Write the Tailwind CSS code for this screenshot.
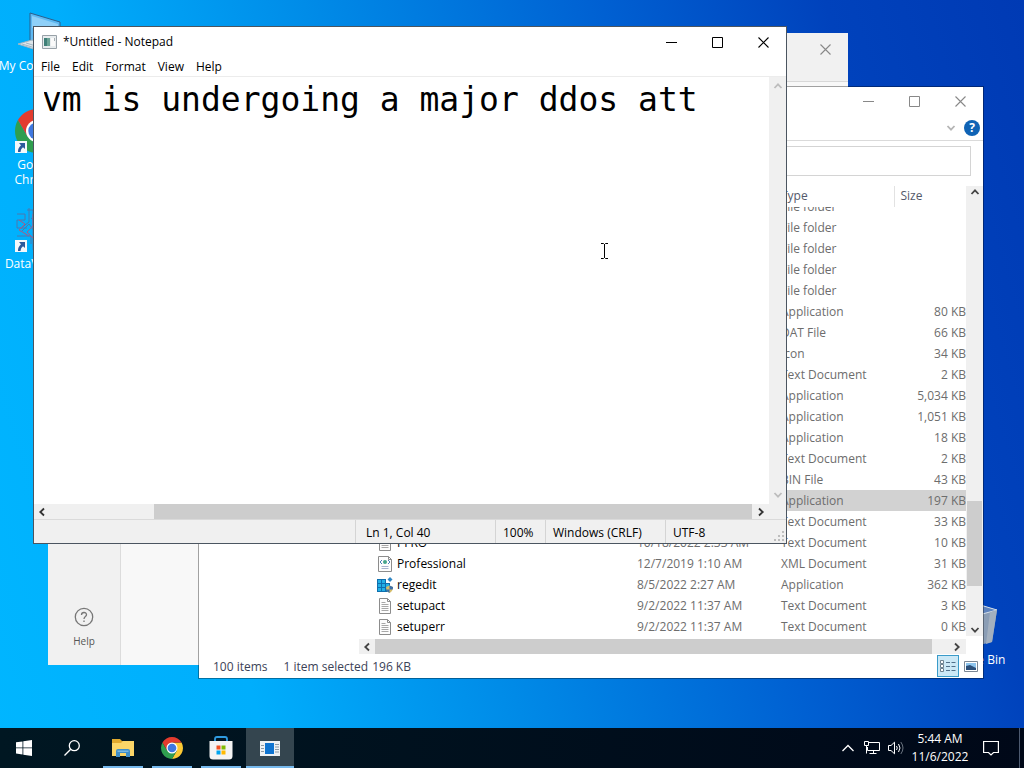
<!DOCTYPE html>
<html lang="en">
<head>
    <meta charset="UTF-8">
    <meta name="viewport" content="width=device-width, initial-scale=1.0">
    <title>Desktop</title>
    <script src="https://cdn.jsdelivr.net/npm/@tailwindcss/browser@4"></script>
</head>
<body class="font-['Open_Sans','Noto_Sans',sans-serif] text-xs text-black">

    <!-- shared shapes -->
    <svg class="hidden">
        <symbol id="win-min" viewBox="0 0 11 11"><path d="M0 5.5h11" stroke="currentColor"/></symbol>
        <symbol id="win-max" viewBox="0 0 11 11"><path d="M.5 .5h10v10h-10z" fill="none" stroke="currentColor"/></symbol>
        <symbol id="win-close" viewBox="0 0 11 11"><path d="M.5 .5l10 10M10.5 .5l-10 10" stroke="currentColor" stroke-width="1.1"/></symbol>
        <symbol id="arrow-up" viewBox="0 0 10 10"><path d="M1.5 7L5 3.3L8.5 7" fill="none" stroke="currentColor" stroke-width="1.8"/></symbol>
        <symbol id="arrow-down" viewBox="0 0 10 10"><path d="M1.5 3L5 6.7L8.5 3" fill="none" stroke="currentColor" stroke-width="1.8"/></symbol>
        <symbol id="arrow-left" viewBox="0 0 10 10"><path d="M7 1.5L3.3 5L7 8.5" fill="none" stroke="currentColor" stroke-width="1.8"/></symbol>
        <symbol id="arrow-right" viewBox="0 0 10 10"><path d="M3 1.5L6.7 5L3 8.5" fill="none" stroke="currentColor" stroke-width="1.8"/></symbol>
        <symbol id="chrome" viewBox="0 0 48 48">
            <path d="M24 13h19.05A22 22 0 0 1 24 46l9.5-16.5z" fill="#fcc934"/>
            <path d="M14.5 29.5L4.95 13A22 22 0 0 0 24 46l9.5-16.5z" fill="#2f9e4f"/>
            <path d="M4.95 13A22 22 0 0 1 43.05 13H24L14.5 29.5z" fill="#e33b2e"/>
            <circle cx="24" cy="24" r="11" fill="#fff"/>
            <circle cx="24" cy="24" r="8.7" fill="#3f78e0"/>
        </symbol>
        <symbol id="shortcut" viewBox="0 0 12 12">
            <path d="M0 0h12v12H0z" fill="#f4f8fb"/>
            <path d="M4 2h6v6L8 6.3C6.5 7.5 6 8.5 5.5 11H3C2.8 8 4 6 6 4.2z" fill="#2c5a9c"/>
        </symbol>
        <symbol id="file-text" viewBox="0 0 16 16">
            <path d="M2.5 .5h8l3 3v12h-11z" fill="#fdfdfd" stroke="#8c8c8c"/>
            <path d="M10.5 .5v3h3" fill="none" stroke="#8c8c8c"/>
            <path d="M4.5 4.5h4M4.5 6.5h7M4.5 8.5h7M4.5 10.5h7M4.5 12.5h7" stroke="#a8a8a8"/>
        </symbol>
        <symbol id="file-xml" viewBox="0 0 16 16">
            <path d="M1.5 .5h10l3 3v12h-13z" fill="#fdfdfd" stroke="#8c8c8c"/>
            <path d="M11.5 .5v3h3" fill="none" stroke="#8c8c8c"/>
            <path d="M5 4L3 6l2 2M11 4l2 2l-2 2" fill="none" stroke="#4a7fb5"/>
            <circle cx="8" cy="6" r="2" fill="#46a58c"/>
            <path d="M4.5 10.5h7M4.5 12.5h7" stroke="#a9b4cf"/>
        </symbol>
        <symbol id="file-reg" viewBox="0 0 16 16">
            <path d="M0 2h9v4h4v9H0z" fill="#0f6fae"/>
            <path d="M1 3h3v3H1zM5 3h3v3H5zM1 7h3v3H1zM5 7h3v3H5zM9 7h3v3H9zM1 11h3v3H1zM5 11h3v3H5z" fill="#23b0e6"/>
            <path d="M13 0l2.5 2.5L13 5l-2.5-2.5z" fill="#2f86c4"/>
            <path d="M9 10l3.5-1.5L16 10c0 3-1.3 5-3.5 6C10.3 15 9 13 9 10z" fill="#d5bd6a"/>
            <path d="M12.5 8.5L16 10c0 1 0 1.5-.3 2.5h-3.2zM12.5 12.5V16C11 15.3 10 14 9.4 12.5z" fill="#3c6fa8"/>
        </symbol>
    </svg>

    <div class="relative h-screen overflow-hidden bg-[linear-gradient(74deg,#00b6ff_0%,#00aefc_22%,#008ce8_42%,#0060d2_66%,#0042bc_84%,#003ab4_100%)]">

        <!-- desktop icons -->
        <div class="w-[74px] pt-2 text-center leading-[15px] text-white">
            <div class="flex h-[99px] flex-col items-center gap-0.5">
                <svg class="size-12" viewBox="0 0 48 48">
                    <path d="M17 5l30 9v26l-30-6z" fill="#5fb9f2" stroke="#2b5f8c"/>
                    <path d="M19 8l26 8v10L19 20z" fill="#8fd0f8"/>
                    <path d="M5 36l14-4l26 8l-12 5z" fill="#dfe6ea" stroke="#9fb6c4"/>
                    <path d="M9 36l20 6M13 35l20 6" stroke="#9fb6c4"/>
                </svg>
                <span class="whitespace-nowrap">My Computer</span>
            </div>
            <div class="flex h-[99px] flex-col items-center gap-0.5">
                <div class="relative">
                    <svg class="size-12"><use href="#chrome"/></svg>
                    <svg class="absolute bottom-0.5 left-0.5 size-3"><use href="#shortcut"/></svg>
                </div>
                <span>Google<br>Chrome</span>
            </div>
            <div class="flex h-[99px] flex-col items-center gap-0.5">
                <div class="relative">
                    <svg class="size-12" viewBox="0 0 48 48" fill="none">
                        <path d="M4 8h8v6h-8v8h10M16 2v14l-8 6M14 4h6v40M8 26l8-8l6 8M4 30h14v8M18 12l8 6l8-8v30" stroke="#4a78b0"/>
                        <path d="M6 14l6 4l-6 6l10 6M20 8v12l-6 6l8 8v10M24 14h16v20H24z" stroke="#a85a86"/>
                    </svg>
                    <svg class="absolute bottom-0.5 left-0.5 size-3"><use href="#shortcut"/></svg>
                </div>
                <span class="whitespace-nowrap">DataViewer</span>
            </div>
        </div>

        <div class="absolute top-[602px] left-[937px] flex w-[74px] flex-col items-center gap-0.5 leading-[15px] text-white">
            <svg class="size-12" viewBox="0 0 48 48">
                <path d="M3 6l24-4l20 6l-5 32l-21 5l-13-4z" fill="#8a9db5"/>
                <path d="M3 6l24-4l20 6l-22 6z" fill="#5e83bd" stroke="#d5dfe9"/>
                <path d="M47 8l-5 32l-6 2l4-32z" fill="#a3b0bf"/>
            </svg>
            <span class="whitespace-nowrap">Recycle Bin</span>
        </div>

        <!-- settings style window, back -->
        <section class="absolute top-[33px] left-12 flex h-[632px] w-[800px] flex-col bg-[#f8f8f8] text-[#555]">
            <header class="flex h-[49px] justify-end border-b border-[#d8d8d8] bg-[#f1f1f1]">
                <button aria-label="Close" class="flex h-8 w-[46px] items-center justify-center text-[#888]"><svg class="size-[11px]"><use href="#win-close"/></svg></button>
            </header>
            <div class="flex flex-1">
                <nav class="flex w-[73px] flex-col justify-end border-r border-[#dcdcdc] bg-[#f1f1f1] pb-4">
                    <button class="flex flex-col items-center gap-1.5 text-[10px] leading-4">
                        <svg class="size-5" viewBox="0 0 20 20" fill="none" stroke="#777" stroke-width="1.3">
                            <circle cx="10" cy="10" r="8.7"/>
                            <path d="M7.5 8C7.5 4.7 12.5 4.7 12.5 7.8C12.5 9.7 10 9.5 10 12M10 13.5v1.5"/>
                        </svg>
                        Help
                    </button>
                </nav>
            </div>
        </section>

        <!-- file explorer -->
        <section class="absolute top-[86px] left-[198px] flex h-[593px] w-[786px] flex-col border border-black/35 bg-white bg-clip-padding text-[#6d6d6d]">
            <header class="flex h-7 justify-end text-[#888]">
                <button aria-label="Minimize" class="flex w-[46px] items-center justify-center"><svg class="size-[11px]"><use href="#win-min"/></svg></button>
                <button aria-label="Maximize" class="flex w-[46px] items-center justify-center"><svg class="size-[11px]"><use href="#win-max"/></svg></button>
                <button aria-label="Close" class="flex w-[46px] items-center justify-center"><svg class="size-[11px]"><use href="#win-close"/></svg></button>
            </header>
            <div class="flex h-[26px] items-center justify-end gap-2 border-b border-[#dadada] pr-[3px]">
                <button aria-label="Expand ribbon" class="text-[#b5b5b5]"><svg class="size-2.5"><use href="#arrow-down"/></svg></button>
                <button aria-label="Help" class="flex size-4 items-center justify-center rounded-full bg-[#0f63b5] text-xs font-bold text-white">?</button>
            </div>
            <div class="flex px-3 pt-[5px] pb-2.5">
                <input aria-label="Address" class="h-[30px] w-full border border-[#d4d4d4]">
            </div>
            <div class="flex min-h-0 flex-1">
                <div class="w-[160px] shrink-0"></div>
                <div class="flex min-w-0 flex-1 flex-col pl-[18px]">
                    <table class="w-full table-fixed leading-5">
                        <thead>
                            <tr class="h-[21px] text-left align-top leading-[19px] text-[#53596a]">
                                <th class="w-[260px] font-normal">Name</th>
                                <th class="w-36 font-normal">Date modified</th>
                                <th class="w-[113px] font-normal">Type</th>
                                <th class="border-l border-[#e2e2e2] pl-1.5 font-normal">Size</th>
                            </tr>
                        </thead>
                        <tbody id="files"></tbody>
                    </table>
                    <div class="-ml-[18px] mt-0.5 flex h-[15px] items-center justify-between bg-[#f0f0f0] text-[#444]">
                        <svg class="mx-[3px] size-2.5 shrink-0"><use href="#arrow-left"/></svg>
                        <div class="h-full flex-1 bg-[#cdcdcd]"></div>
                        <svg class="mr-1 ml-5 size-2.5 shrink-0"><use href="#arrow-right"/></svg>
                    </div>
                </div>
                <div class="mb-[18px] flex w-[17px] flex-col items-center bg-[#f0f0f0] py-px text-[#444]">
                    <svg class="size-2.5"><use href="#arrow-up"/></svg>
                    <div class="flex-1"></div>
                    <div class="h-[85px] w-[15px] bg-[#cdcdcd]"></div>
                    <div class="h-[39px]"></div>
                    <svg class="size-2.5"><use href="#arrow-down"/></svg>
                </div>
            </div>
            <footer class="flex h-6 items-center gap-1 pr-1 pl-3.5 leading-[18px] text-[#3b4257]">
                <span class="mr-3 pt-0.5">100 items</span>
                <span class="pt-0.5">1 item selected</span>
                <span class="flex-1 pt-0.5">196 KB</span>
                <button aria-label="Details" class="flex h-[22px] w-[22px] items-center justify-center border border-[#3a9bc9] bg-[#cbe8f6]">
                    <svg class="size-4" viewBox="0 0 16 16" fill="none">
                        <path d="M.5 2.500h3v3h-3zM.5 6.500h3v3h-3zM.5 10.500h3v3h-3z" fill="#fff" stroke="#6e8290"/>
                        <path d="M6 4.500h4M11.500 4.500h4M6 8.500h4M11.500 8.500h4M6 12.500h4M11.500 12.500h4" stroke="#51708a"/>
                    </svg>
                </button>
                <button aria-label="Thumbnails" class="flex h-[22px] w-4 items-center justify-center">
                    <svg class="h-[11px] w-3.5" viewBox="0 0 14 11">
                        <path d="M.5 .5h13v10H.5z" fill="#fff" stroke="#7b8794"/>
                        <path d="M2 2h10v7H2z" fill="#8ec5ee"/><path d="M2 5l4-1l6 3v2H2z" fill="#2c4f79"/>
                    </svg>
                </button>
            </footer>
        </section>

        <!-- notepad -->
        <section class="absolute top-[26px] left-[33px] flex h-[518px] w-[754px] flex-col border border-[#4b5560] bg-white">
            <header class="flex h-[30px] items-center pl-2">
                <svg class="mr-1.5 h-3.5 w-[15px]" viewBox="0 0 15 14">
                    <path d="M.5 .5h14v13H.5z" fill="#e8ecee" stroke="#98a1a8"/>
                    <path d="M2 3h5v8H2z" fill="#3f7f78"/><path d="M5 3h3v8H5z" fill="#6ba396"/>
                    <path d="M9 3h4v8H9z" fill="#fafafa"/><path d="M12 3h1v3h-1z" fill="#a8b0b5"/>
                </svg>
                <h1 class="flex-1">*Untitled - Notepad</h1>
                <button aria-label="Minimize" class="flex h-7 w-[46px] items-center justify-center"><svg class="size-[11px]"><use href="#win-min"/></svg></button>
                <button aria-label="Maximize" class="flex h-7 w-[46px] items-center justify-center"><svg class="size-[11px]"><use href="#win-max"/></svg></button>
                <button aria-label="Close" class="flex h-7 w-[46px] items-center justify-center"><svg class="size-[11px]"><use href="#win-close"/></svg></button>
            </header>
            <nav class="flex h-5 items-center gap-3 border-b border-[#ececec] pl-[7px]">
                <button>File</button>
                <button>Edit</button>
                <button>Format</button>
                <button>View</button>
                <button>Help</button>
            </nav>
            <div class="flex min-h-0 flex-1">
                <textarea aria-label="Text editor" wrap="off" spellcheck="false" class="ml-2.5 flex-1 resize-none overflow-hidden pt-0.5 -indent-0.5 font-['DejaVu_Sans_Mono',monospace] text-[33px] leading-[42px] outline-none">vm is undergoing a major ddos att</textarea>
                <div class="flex w-[17px] flex-col items-center justify-between bg-[#f0f0f0] py-1 text-[#bdbdbd]">
                    <svg class="size-2.5"><use href="#arrow-up"/></svg>
                    <svg class="size-2.5"><use href="#arrow-down"/></svg>
                </div>
            </div>
            <div class="flex h-[15px] items-center bg-[#f0f0f0] text-[#333]">
                <svg class="ml-[3px] size-2.5"><use href="#arrow-left"/></svg>
                <div class="ml-[107px] h-full flex-1 bg-[#cdcdcd]"></div>
                <svg class="mr-5 ml-1 size-2.5"><use href="#arrow-right"/></svg>
            </div>
            <footer class="flex h-6 items-stretch border-t border-[#dadada] bg-[#f0f0f0] leading-[25px]">
                <div class="flex-1"></div>
                <div class="w-[140px] border-l border-[#d4d4d4] pl-2.5">Ln 1, Col 40</div>
                <div class="w-[50px] border-l border-[#d4d4d4] pl-[7px]">100%</div>
                <div class="w-[120px] border-l border-[#d4d4d4] pl-[7px]">Windows (CRLF)</div>
                <div class="flex w-[121px] items-end justify-between border-l border-[#d4d4d4] pl-[7px]">
                    <span class="h-full">UTF-8</span>
                    <svg class="m-0.5 size-2.5" viewBox="0 0 10 10" fill="#bdbdbd"><path d="M8 0h2v2H8zM8 4h2v2H8zM8 8h2v2H8zM4 4h2v2H4zM4 8h2v2H4zM0 8h2v2H0z"/></svg>
                </div>
            </footer>
        </section>

        <!-- text cursor -->
        <svg class="absolute top-[243px] left-[600px] h-4 w-[9px]" viewBox="0 0 9 16" fill="none" stroke="#000"><path d="M1 .5h2.5l1 1l1-1H8M4.5 1v14M1 15.5h2.5l1-1l1 1H8"/></svg>

        <!-- taskbar -->
        <footer class="absolute inset-x-0 bottom-0 flex h-10 bg-linear-to-r from-[#001722] to-[#000818] text-white">
            <button aria-label="Start" class="flex w-12 items-center justify-center">
                <svg class="size-4" viewBox="0 0 16 16" fill="#fff"><path d="M0 2.3L6.5 1.4V7.5H0zM7.3 1.3L16 0V7.5H7.3zM0 8.3H6.5V14.5L0 13.6zM7.3 8.3H16V16L7.3 14.7z"/></svg>
            </button>
            <button aria-label="Search" class="mr-[3px] flex w-12 items-center justify-center">
                <svg class="size-4" viewBox="0 0 16 16" fill="none" stroke="#fff" stroke-width="1.3"><circle cx="10.3" cy="5.7" r="5"/><path d="M6.7 9.3L.5 15.5"/></svg>
            </button>
            <div class="flex gap-px">
                <button aria-label="File Explorer" class="relative flex w-12 items-center justify-center">
                    <svg class="h-[18px] w-[22px]" viewBox="0 0 22 18">
                        <path d="M0 0h8l2 2h11v15H0z" fill="#e0a92e"/><path d="M0 4h9l2-2h11v15H0z" fill="#fbd668"/>
                        <path d="M4 18v-6q0-2 2-2h10q2 0 2 2v6h-4v-4H8v4z" fill="#3f8fc9"/><path d="M5.5 13v-1.5h11V13z" fill="#79b9e4"/>
                    </svg>
                    <span class="absolute inset-x-1 bottom-0 h-0.5 bg-[#76b9ed]"></span>
                </button>
                <button aria-label="Google Chrome" class="relative flex w-12 items-center justify-center">
                    <svg class="size-6"><use href="#chrome"/></svg>
                    <span class="absolute inset-x-1 bottom-0 h-0.5 bg-[#76b9ed]"></span>
                </button>
                <button aria-label="Store" class="relative flex w-12 items-center justify-center">
                    <svg class="size-6" viewBox="0 0 24 24">
                        <path d="M6 6V3q0-2 2-2h8q2 0 2 2v3" fill="none" stroke="#2f9be0" stroke-width="1.8"/>
                        <path d="M.5 5h23v15q0 3.5-3.5 3.5H4Q.5 23.5 .5 20z" fill="#f3f3f3"/>
                        <path d="M7.500 9.500h4v4h-4z" fill="#f25022"/><path d="M12.500 9.500h4v4h-4z" fill="#7fba00"/><path d="M7.500 14.500h4v4h-4z" fill="#00a4ef"/><path d="M12.500 14.500h4v4h-4z" fill="#ffb900"/>
                    </svg>
                    <span class="absolute inset-x-1 bottom-0 h-0.5 bg-[#76b9ed]"></span>
                </button>
                <button aria-label="Notepad" class="relative flex w-12 items-center justify-center bg-[#34454f]">
                    <svg class="h-[15px] w-5" viewBox="0 0 20 15">
                        <path d="M0 0h20v15H0z" fill="#eef1f3"/><path d="M5 2h9v11H5z" fill="#0f74d0"/>
                        <path d="M1 4.5h3M1 7.5h3M1 10.5h3M15 3.5h4M15 6h4M15 8.5h4M15 11h4" stroke="#8c9aa5"/>
                    </svg>
                    <span class="absolute inset-x-0 bottom-0 h-0.5 bg-[#76b9ed]"></span>
                </button>
            </div>
            <div class="flex-1"></div>
            <div class="flex items-center">
                <button aria-label="Show hidden icons" class="flex w-6 justify-center"><svg class="h-2 w-3" viewBox="0 0 12 8" fill="none" stroke="#fff" stroke-width="1.3"><path d="M.5 7L6 1.5L11.5 7"/></svg></button>
                <button aria-label="Network" class="flex w-6 justify-center">
                    <svg class="h-3.5 w-4" viewBox="0 0 16 14" fill="none" stroke="#fff"><path d="M5 1.5h10.5v8H3.5V6M.5 .5h4v4h-4zM2.5 4.5v8M9.5 9.5v3M5.5 12.5h7"/></svg>
                </button>
                <button aria-label="Volume" class="flex w-6 justify-center">
                    <svg class="h-3.5 w-4" viewBox="0 0 16 14" fill="none" stroke="#fff"><path d="M.5 4.5h2.5L6.5 1.2v11.6L3 9.5H.5zM8.5 5q1.5 2 0 4M10.5 3q3 4 0 8"/><path d="M12.8 1q4.4 6 0 12" stroke="#6b7480"/></svg>
                </button>
                <time class="w-16 text-center leading-[18px]">5:44 AM<br>11/6/2022</time>
                <button aria-label="Notifications" class="flex w-[38px] justify-center">
                    <svg class="size-4" viewBox="0 0 16 16" fill="none" stroke="#fff" stroke-width="1.2"><path d="M.6 1.5h14.8v11h-4.9L8 15l-2.5-2.500H.6z"/></svg>
                </button>
            </div>
            <div class="ml-[9px] w-[5px] border-l border-[#4d5a70]"></div>
        </footer>
    </div>

    <script>
        const files = [
            ['', '', '', 'File folder', ''],
            ['', '', '', 'File folder', ''],
            ['', '', '', 'File folder', ''],
            ['', '', '', 'File folder', ''],
            ['', '', '', 'File folder', ''],
            ['', '', '', 'Application', '80 KB'],
            ['', '', '', 'DAT File', '66 KB'],
            ['', '', '', 'Icon', '34 KB'],
            ['', '', '', 'Text Document', '2 KB'],
            ['', '', '', 'Application', '5,034 KB'],
            ['', '', '', 'Application', '1,051 KB'],
            ['', '', '', 'Application', '18 KB'],
            ['', '', '', 'Text Document', '2 KB'],
            ['', '', '', 'BIN File', '43 KB'],
            ['', '', '', 'Application', '197 KB'],
            ['', '', '', 'Text Document', '33 KB'],
            ['file-text', 'PFRO', '10/18/2022 2:33 AM', 'Text Document', '10 KB'],
            ['file-xml', 'Professional', '12/7/2019 1:10 AM', 'XML Document', '31 KB'],
            ['file-reg', 'regedit', '8/5/2022 2:27 AM', 'Application', '362 KB'],
            ['file-text', 'setupact', '9/2/2022 11:37 AM', 'Text Document', '3 KB'],
            ['file-text', 'setuperr', '9/2/2022 11:37 AM', 'Text Document', '0 KB'],
        ];
        const selected = 14;

        document.getElementById('files').innerHTML = files.map(([icon, name, date, type, size], i) => {
            // first row is scrolled half out of view
            if (i === 0) {
                return `<tr><td></td><td></td><td><div class="flex h-2.5 items-end overflow-hidden">${type}</div></td><td></td></tr>`;
            }
            return `<tr class="h-[21px] ${i === selected ? 'bg-[#d2d2d2]' : ''}">
                <td><div class="flex items-center gap-1 text-black">${icon ? `<svg class="size-4"><use href="#${icon}"/></svg>` : ''}${name}</div></td>
                <td>${date}</td>
                <td>${type}</td>
                <td class="text-right">${size}</td>
            </tr>`;
        }).join('');
    </script>
</body>
</html>
